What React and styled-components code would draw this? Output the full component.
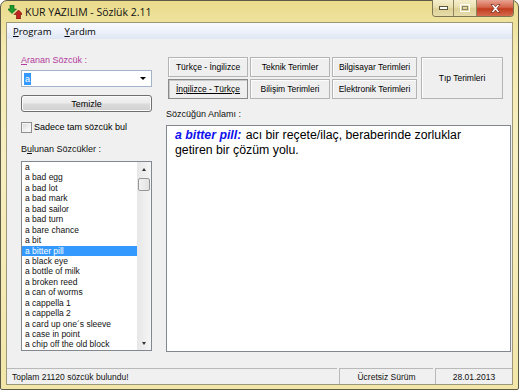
import React from 'react';
import styled, { createGlobalStyle } from 'styled-components';

const GlobalStyle = createGlobalStyle`
  html, body {
    margin: 0;
    padding: 0;
    background: #ffffff;
  }
  body {
    width: 520px;
    height: 392px;
    overflow: hidden;
    font-family: "Liberation Sans", Arial, sans-serif;
  }
`;

const Window = styled.div`
  box-sizing: border-box;
  width: 519px;
  height: 390px;
  border: 1px solid #5d5a48;
  border-radius: 7px 7px 2px 2px;
  background: linear-gradient(180deg, #eadb8c 0%, #f4eab0 12%, #f7efc0 40%, #f2e6a8 100%);
  padding: 0 5px 4px 5px;
  display: flex;
  flex-direction: column;
`;

const TitleBar = styled.div`
  height: 21px;
  display: flex;
  align-items: flex-start;
`;

const TitleIcon = styled.svg`
  margin: 4px 0 0 2px;
  flex: none;
`;

const TitleText = styled.div`
  margin: 5px 0 0 3px;
  font-family: "Open Sans", "Liberation Sans", sans-serif;
  font-size: 10.5px;
  line-height: 13px;
  color: #111;
  flex: 1;
`;

const Caption = styled.div`
  display: flex;
  height: 16px;
  margin-top: -1px;
  margin-right: -1px;
  border: 1px solid #7d7653;
  border-top: none;
  border-radius: 0 0 4px 4px;
  overflow: hidden;
`;

const CapButton = styled.div`
  width: ${p => p.w}px;
  display: flex;
  align-items: center;
  justify-content: center;
  background: ${p => p.close
    ? 'linear-gradient(180deg, #e8a493 0%, #d4654b 45%, #c23c1f 55%, #d56a4d 100%)'
    : 'linear-gradient(180deg, #f6efcd 0%, #e9dfb0 45%, #ddd197 55%, #e7dcab 100%)'};
  & + & {
    border-left: 1px solid #8f875f;
  }
`;

const Client = styled.div`
  flex: 1;
  border: 1px solid #9c9779;
  background: #f0f0f0;
  display: flex;
  flex-direction: column;
`;

const MenuBar = styled.div`
  height: 16px;
  display: flex;
  align-items: center;
  gap: 13px;
  padding-left: 6px;
  background: linear-gradient(180deg, #f8fafd 0%, #eef2fa 50%, #dfe7f4 100%);
  font-family: "Open Sans", "Liberation Sans", sans-serif;
  font-size: 9.5px;
  color: #000;
`;

const U = styled.span`
  text-decoration: underline;
`;

const Body = styled.div`
  flex: 1;
  display: flex;
  gap: 14px;
  padding: 16px 1px 0 14px;
  font-size: 8.5px;
  color: #000;
`;

const LeftCol = styled.div`
  width: 131px;
  display: flex;
  flex-direction: column;
`;

const RightCol = styled.div`
  width: 345px;
  display: flex;
  flex-direction: column;
`;

const Label = styled.div`
  height: 11px;
  line-height: 11px;
  font-size: 9px;
  color: ${p => p.accent ? '#b23a9c' : '#111'};
  margin-top: ${p => p.top || 0}px;
`;

const Combo = styled.div`
  box-sizing: border-box;
  margin-top: 4px;
  height: 17px;
  border: 1px solid #a3b3c8;
  background: #fff;
  display: flex;
  align-items: center;
  padding: 0 5px 0 2px;
`;

const Selected = styled.span`
  background: #3399ff;
  color: #fff;
  font-size: 9px;
  line-height: 12px;
  padding: 0 1px;
`;

const Arrow = styled.span`
  margin-left: auto;
  width: 0;
  height: 0;
  border-left: 3px solid transparent;
  border-right: 3px solid transparent;
  border-top: 3px solid #000;
`;

const PushButton = styled.div`
  box-sizing: border-box;
  margin-top: 8px;
  height: 17px;
  border: 1px solid #707070;
  border-radius: 3px;
  background: linear-gradient(180deg, #f4f4f4 0%, #ebebeb 48%, #dcdcdc 52%, #d0d0d0 100%);
  box-shadow: inset 0 0 0 1px #fbfbfb;
  display: flex;
  align-items: center;
  justify-content: center;
  font-size: 9px;
`;

const CheckRow = styled.label`
  margin-top: 9px;
  display: flex;
  align-items: center;
  gap: 2px;
  height: 12px;
  font-size: 9px;
`;

const CheckBox = styled.span`
  box-sizing: border-box;
  width: 11px;
  height: 11px;
  border: 1px solid #8e8f8f;
  background: linear-gradient(135deg, #d8d8d8 0%, #f1f1f1 60%, #ffffff 100%);
  box-shadow: inset 0 0 0 1px #f4f4f4;
`;

const ListBox = styled.div`
  box-sizing: border-box;
  margin-top: 6px;
  height: 190px;
  border: 1px solid #828790;
  background: #fff;
  display: flex;
`;

const ListItems = styled.div`
  flex: 1;
`;

const Item = styled.div`
  height: 10.45px;
  line-height: 10.45px;
  padding-left: 3px;
  white-space: nowrap;
  background: ${p => p.active ? '#3399ff' : 'transparent'};
  color: ${p => p.active ? '#fff' : '#111'};
`;

const ScrollBar = styled.div`
  width: 14px;
  display: flex;
  flex-direction: column;
  background: linear-gradient(90deg, #e7e7e7, #f5f5f5);
`;

const ScrollBtn = styled.div`
  height: 14px;
  display: flex;
  align-items: center;
  justify-content: center;
`;

const Tri = styled.span`
  width: 0;
  height: 0;
  border-left: 2.5px solid transparent;
  border-right: 2.5px solid transparent;
  ${p => p.up ? 'border-bottom: 3px solid #333;' : 'border-top: 3px solid #333;'}
`;

const Thumb = styled.div`
  box-sizing: border-box;
  margin: 2px 1px 0 1px;
  height: 13px;
  border: 1px solid #979797;
  border-radius: 2px;
  background: linear-gradient(90deg, #f2f2f2, #e2e2e2);
`;

const Spacer = styled.div`
  flex: 1;
`;

const CatGrid = styled.div`
  margin: 2px 0 0 2px;
  display: grid;
  grid-template-columns: 80px 80px 85px 84px;
  grid-template-rows: 20px 20px;
  column-gap: 2px;
  row-gap: 2px;
`;

const CatButton = styled.div`
  box-sizing: border-box;
  display: flex;
  align-items: center;
  justify-content: center;
  font-size: 8.5px;
  white-space: nowrap;
  background: #efefef;
  border: 1px solid ${p => p.pressed ? '#8a8a8a' : '#b4b4b4'};
  box-shadow: ${p => p.pressed ? 'inset 1px 1px 0 #c8c8c8' : 'inset 1px 1px 0 #fdfdfd'};
  text-decoration: ${p => p.pressed ? 'underline' : 'none'};
  ${p => p.tall && 'grid-column: 4; grid-row: 1 / span 2; margin-left: 2px;'}
`;

const MeaningBox = styled.div`
  box-sizing: border-box;
  margin-top: 5px;
  height: 227px;
  border: 1px solid #828790;
  background: #fff;
  padding: 2px 0 0 8px;
`;

const Meaning = styled.p`
  margin: 0;
  width: 318px;
  font-size: 12.3px;
  line-height: 15px;
  color: #000;
`;

const Term = styled.b`
  font-style: italic;
  color: #1010ee;
  margin-right: 1px;
`;

const StatusBar = styled.div`
  height: 16px;
  display: flex;
  font-size: 8.5px;
  color: #111;
`;

const Panel = styled.div`
  box-sizing: border-box;
  width: ${p => p.w ? `${p.w}px` : 'auto'};
  flex: ${p => p.w ? 'none' : 1};
  margin-left: ${p => p.first ? 0 : 2}px;
  border-top: 1px solid #b9b9b9;
  border-left: ${p => p.first ? 'none' : '1px solid #b9b9b9'};
  display: flex;
  align-items: center;
  justify-content: ${p => p.first ? 'flex-start' : 'center'};
  padding-left: ${p => p.first ? 5 : 0}px;
`;

const words = [
  'a', 'a bad egg', 'a bad lot', 'a bad mark', 'a bad sailor', 'a bad turn',
  'a bare chance', 'a bit', 'a bitter pill', 'a black eye', 'a bottle of milk',
  'a broken reed', 'a can of worms', 'a cappella 1', 'a cappella 2',
  'a card up one\u00b4s sleeve', 'a case in point', 'a chip off the old block',
];

function AppIcon() {
  return (
    <TitleIcon width="14" height="14" viewBox="0 0 14 14">
      <path d="M2 0h4v4h2.5L4 8.5-.5 4H2z" fill="#1f9a2c" stroke="#0d5a15" strokeWidth="0.6" />
      <path d="M8.5 14V9.5H6L10.5 5 15 9.5h-2.5V14z" fill="#c2221d" stroke="#6d0f0c" strokeWidth="0.6" />
    </TitleIcon>
  );
}

export default function App() {
  return (
    <>
      <GlobalStyle />
      <Window>
        <TitleBar>
          <AppIcon />
          <TitleText>KUR YAZILIM - Sözlük 2.11</TitleText>
          <Caption>
            <CapButton w={20}>
              <svg width="9" height="4"><rect x="0.5" y="0.5" width="8" height="3" fill="#fff" stroke="#5c5638" /></svg>
            </CapButton>
            <CapButton w={22}>
              <svg width="10" height="8"><rect x="0.5" y="0.5" width="9" height="7" fill="none" stroke="#fff" strokeWidth="1" /><rect x="2.5" y="2.5" width="5" height="3" fill="none" stroke="#8b8464" /></svg>
            </CapButton>
            <CapButton w={36} close>
              <svg width="11" height="9" viewBox="0 0 11 9">
                <path d="M1 0.5h2.5l2 2.3 2-2.3h2.5L7 4.5l3 4H7.5l-2-2.4-2 2.4H1l3-4z" fill="#fff" stroke="#6e2312" strokeWidth="0.7" />
              </svg>
            </CapButton>
          </Caption>
        </TitleBar>
        <Client>
          <MenuBar>
            <span><U>P</U>rogram</span>
            <span><U>Y</U>ardım</span>
          </MenuBar>
          <Body>
            <LeftCol>
              <Label accent><U>A</U>ranan Sözcük :</Label>
              <Combo>
                <Selected>a</Selected>
                <Arrow />
              </Combo>
              <PushButton>Temizle</PushButton>
              <CheckRow>
                <CheckBox />
                <span>Sadece tam sözcük bul</span>
              </CheckRow>
              <Label top={11}>B<U>u</U>lunan Sözcükler :</Label>
              <ListBox>
                <ListItems>
                  {words.map(w => (
                    <Item key={w} active={w === 'a bitter pill'}>{w}</Item>
                  ))}
                </ListItems>
                <ScrollBar>
                  <ScrollBtn><Tri up /></ScrollBtn>
                  <Thumb />
                  <Spacer />
                  <ScrollBtn><Tri /></ScrollBtn>
                </ScrollBar>
              </ListBox>
            </LeftCol>
            <RightCol>
              <CatGrid>
                <CatButton>Türkçe - İngilizce</CatButton>
                <CatButton>Teknik Terimler</CatButton>
                <CatButton>Bilgisayar Terimleri</CatButton>
                <CatButton tall>Tıp Terimleri</CatButton>
                <CatButton pressed>İngilizce - Türkçe</CatButton>
                <CatButton>Bilişim Terimleri</CatButton>
                <CatButton>Elektronik Terimleri</CatButton>
              </CatGrid>
              <Label top={10}>Sözcüğün Anlamı :</Label>
              <MeaningBox>
                <Meaning>
                  <Term>a bitter pill:</Term>{' '}
                  <span>acı bir reçete/ilaç, beraberinde zorluklar</span>{' '}
                  <span>getiren bir çözüm yolu.</span>
                </Meaning>
              </MeaningBox>
            </RightCol>
          </Body>
          <StatusBar>
            <Panel first>Toplam 21120 sözcük bulundu!</Panel>
            <Panel w={94}>Ücretsiz Sürüm</Panel>
            <Panel w={77}>28.01.2013</Panel>
          </StatusBar>
        </Client>
      </Window>
    </>
  );
}
